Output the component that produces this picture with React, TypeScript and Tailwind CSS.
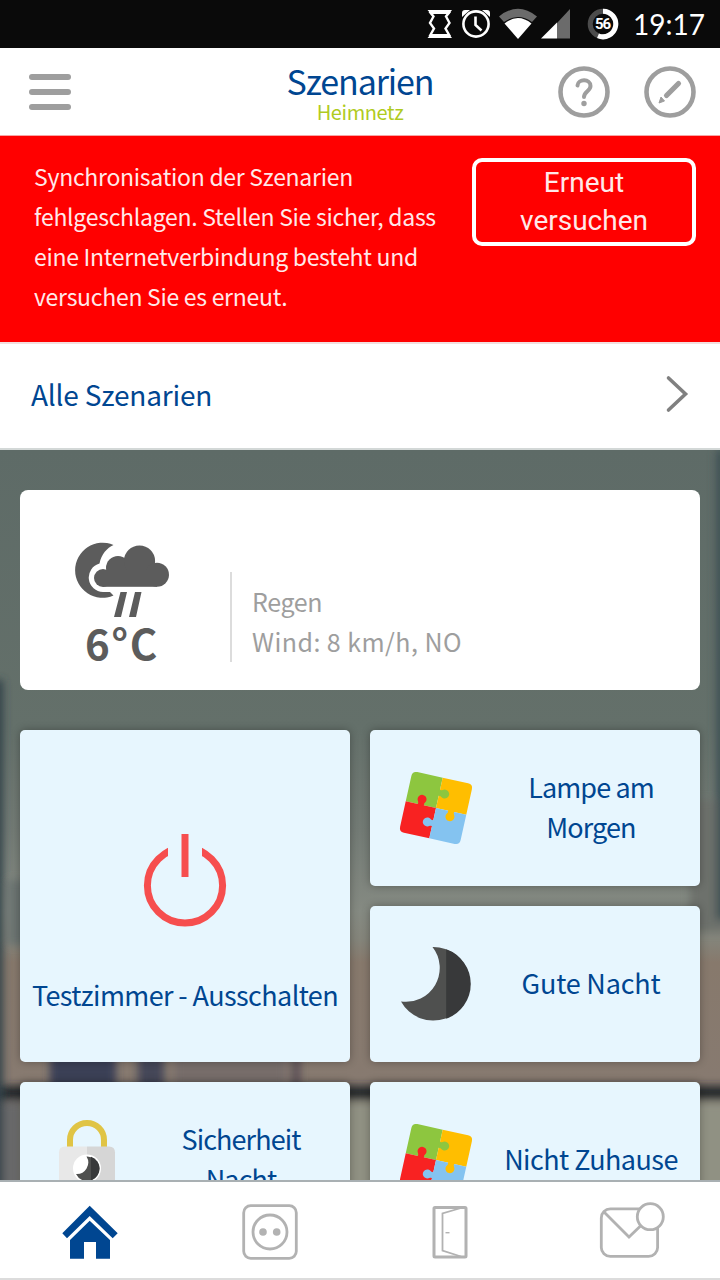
import React from 'react';
import clsx from 'clsx';

const FONT = "font-['Noto_Sans_CJK_SC','Noto_Sans',sans-serif]";

function StatusBar() {
  return (
    <div className="h-12 bg-[#0a0a0a] flex items-center justify-end pr-[15px] text-white">
      <svg className="mr-2" width="26" height="32" viewBox="0 0 26 32" fill="none" stroke="white">
        <path d="M.5 2H25L22 6H4ZM4 26H22L25 30H.5Z" fill="white" stroke="none" />
        <path d="M2.500 3.500L6.500 8.500L3 15L7 20.500L2.500 28.500M23 3.500L19 8.500L22.500 15L18.500 20.500L23 28.500" strokeWidth="2.400" />
      </svg>
      <svg className="mr-2" width="30" height="32" viewBox="0 0 30 32" fill="none" stroke="white">
        <circle cx="15" cy="16" r="12.600" strokeWidth="2.600" />
        <path d="M1 9V5Q1 2 4 2H9ZM29 9V5Q29 2 26 2H21Z" fill="white" stroke="none" />
        <path d="M14.500 8.500V17l6 5.500" strokeWidth="2.600" />
      </svg>
      <svg className="mr-1" width="38" height="32" viewBox="0 0 38 32">
        <path d="M0 8.500Q19-7 38 8.500L33 14Q19 4 5 14Z" fill="#6b6b6b" />
        <path d="M5.500 15.500Q19 4.500 32.500 15.500L19 31Z" fill="white" />
      </svg>
      <svg className="mr-[17px]" width="29" height="32" viewBox="0 0 29 32">
        <path d="M16 15L29 1V30.500H16Z" fill="#6b6b6b" />
        <path d="M0 30.500L16 14.500V30.500Z" fill="white" />
      </svg>
      <div className="relative mr-[14px] w-8 h-8 flex items-center justify-center">
        <svg className="absolute inset-0" width="32" height="32" viewBox="0 0 32 32" fill="none" strokeWidth="5">
          <circle cx="16" cy="16" r="12.800" stroke="#4c4c4c" />
          <path d="M16 3.200A12.800 12.800 0 1 1 11 27.800" stroke="white" />
        </svg>
        <span className="relative font-[Roboto,sans-serif] text-[15px] leading-none font-bold tracking-[-1px] pr-px">56</span>
      </div>
      <span className="font-['Lato',sans-serif] text-[28px] leading-none w-[72px] whitespace-nowrap">19:17</span>
    </div>
  );
}

function Header() {
  return (
    <header className="h-[88px] bg-white border-b border-[#f7a5a5] grid grid-cols-[1fr_auto_1fr] items-center">
      <div className="pl-[29px] flex flex-col gap-[9px]">
        <span className="w-[42px] h-1.5 rounded-full bg-[#9e9e9e]" />
        <span className="w-[42px] h-1.5 rounded-full bg-[#9e9e9e]" />
        <span className="w-[42px] h-1.5 rounded-full bg-[#9e9e9e]" />
      </div>
      <div className="text-center pt-0.5">
        <h1 className="text-[34px] leading-[38px] tracking-[-1.1px] text-[#004691]">Szenarien</h1>
        <p className="text-[20px] leading-6 tracking-[-0.4px] text-[#b0cb1f]">Heimnetz</p>
      </div>
      <div className="flex justify-end gap-[34px] pr-6">
        <svg width="52" height="52" viewBox="0 0 52 52" fill="none" stroke="#9e9e9e">
          <circle cx="26" cy="26" r="23.500" strokeWidth="4.600" />
          <path d="M19.500 19.500C20 12.500 32.500 12.500 32.500 20C32.500 25 26 25.500 26 31" strokeWidth="4" strokeLinecap="round" />
          <circle cx="26" cy="37.500" r="2.700" fill="#9e9e9e" stroke="none" />
        </svg>
        <svg width="52" height="52" viewBox="0 0 52 52" fill="none" stroke="#9e9e9e">
          <circle cx="26" cy="26" r="23.500" strokeWidth="4.600" />
          <path d="M22.500 29.500L34.500 17.500" strokeWidth="5.200" strokeLinecap="round" />
          <path d="M17 31L20.500 35L15 37Z" fill="#9e9e9e" strokeWidth="1" strokeLinejoin="round" />
        </svg>
      </div>
    </header>
  );
}

function SyncError() {
  return (
    <section className="h-[206px] bg-[#ff0000] flex items-start justify-between pl-[34px] pr-6 pt-[22px]">
      <p className="-mt-0.5 text-[23px] leading-10 tracking-[-0.28px] text-[#ffe9e9] whitespace-nowrap">
        Synchronisation der Szenarien<br />
        fehlgeschlagen. Stellen Sie sicher, dass<br />
        eine Internetverbindung besteht und<br />
        versuchen Sie es erneut.
      </p>
      <button className="w-[224px] h-[88px] border-4 border-white rounded-[10px] font-[Roboto,sans-serif] text-[28px] leading-[38px] text-[#ffe9e9]">
        Erneut<br />versuchen
      </button>
    </section>
  );
}

// blurred book shelf behind the tiles
function Backdrop() {
  return (
    <svg className="absolute inset-0" width="720" height="732" viewBox="0 0 720 732" preserveAspectRatio="none">
      <defs>
        <linearGradient id="wall" x1="0" y1="0" x2="0" y2="1">
          <stop offset="0" stopColor="#5e6b67" />
          <stop offset="0.38" stopColor="#64706a" />
          <stop offset="0.52" stopColor="#737b75" />
          <stop offset="0.63" stopColor="#858a82" />
          <stop offset="0.67" stopColor="#84847a" />
          <stop offset="0.7" stopColor="#87796c" />
          <stop offset="0.86" stopColor="#877a70" />
        </linearGradient>
        <filter id="soft" x="-5%" y="-5%" width="110%" height="110%">
          <feGaussianBlur stdDeviation="4" />
        </filter>
      </defs>
      <rect width="720" height="732" fill="url(#wall)" />
      <g filter="url(#soft)">
        <rect x="8" y="430" width="40" height="65" fill="#6b7371" />
        <rect x="50" y="604" width="66" height="32" fill="#3b4157" />
        <rect x="138" y="604" width="26" height="32" fill="#444659" />
        <rect x="174" y="604" width="112" height="32" fill="#776d6b" />
        <rect x="292" y="604" width="8" height="32" fill="#574c55" />
        <rect x="690" y="350" width="40" height="132" fill="#6d716c" />
        <rect x="-10" y="652" width="740" height="90" fill="#909183" />
        <rect x="-10" y="652" width="32" height="90" fill="#69696a" />
        <rect x="-10" y="636" width="740" height="14" fill="#242729" />
        <rect x="-10" y="230" width="13" height="510" fill="#30434a" />
        <rect x="716" y="0" width="14" height="470" fill="#3f5155" />
      </g>
    </svg>
  );
}

function Weather() {
  return (
    <div className="h-[200px] rounded-lg bg-white flex">
      <div className="w-[204px] pt-[51px] flex flex-col items-center text-[#5c5c5c]">
        <svg width="96" height="78" viewBox="74 541 96 78" fill="#5c5c5c">
          <path d="M113.500 545A27.500 27.500 0 1 0 113.500 595.500L110 592H103A14.500 14.500 0 0 1 99.500 563.500C101.500 554 107 548 113.500 545Z" />
          <circle cx="103" cy="578" r="9" />
          <circle cx="118" cy="568" r="12" />
          <circle cx="139.500" cy="561" r="15.600" />
          <circle cx="157" cy="574.800" r="12" />
          <rect x="103" y="570" width="54" height="16.800" />
          <path d="M120.500 592H127L121 617H114ZM135 592H141.500L136 617H129Z" />
        </svg>
        <span className="-mt-0.5 text-[42px] leading-[50px] font-bold tracking-[1.5px]">6°C</span>
      </div>
      <div className="mt-[82px] ml-[6px] h-[90px] w-0.5 bg-[#dcdcdc]" />
      <p className="mt-[91px] ml-5 text-[25px] leading-10 text-[#9e9e9e] whitespace-nowrap">
        <span className="tracking-[-0.4px]">Regen</span><br />
        <span className="tracking-[0.45px]">Wind: 8 km/h, NO</span>
      </p>
    </div>
  );
}

function PowerIcon() {
  return (
    <svg width="84" height="96" viewBox="0 0 84 96" fill="none" stroke="#f64e4e" strokeWidth="7">
      <circle cx="42" cy="51.500" r="37.600" />
      <rect x="25" y="5" width="34" height="25" fill="#e7f6fe" stroke="none" />
      <path d="M42 0V43" />
    </svg>
  );
}

function PuzzleIcon() {
  return (
    <svg width="76" height="76" viewBox="-38 -38 76 76">
      <g transform="rotate(12.5)">
        <path d="M0-31H-26Q-31-31-31-26V0H0Z" fill="#8dc63f" />
        <path d="M0-31H26Q31-31 31-26V0H0Z" fill="#ffbe00" />
        <path d="M0 31H-26Q-31 31-31 26V0H0Z" fill="#f82222" />
        <path d="M0 31H26Q31 31 31 26V0H0Z" fill="#84c3f0" />
        <path d="M-1-18.500H4V-12.500H-1Z" fill="#8dc63f" />
        <circle cx="5.500" cy="-15.500" r="4.500" fill="#8dc63f" />
        <path d="M12.500-1H18.500V4H12.500Z" fill="#ffbe00" />
        <circle cx="15.500" cy="5.500" r="4.500" fill="#ffbe00" />
        <path d="M-4 12.500H1V18.500H-4Z" fill="#84c3f0" />
        <circle cx="-5.500" cy="15.500" r="4.500" fill="#84c3f0" />
        <path d="M-18.500-4H-12.500V1H-18.500Z" fill="#f82222" />
        <circle cx="-15.500" cy="-5.500" r="4.500" fill="#f82222" />
      </g>
    </svg>
  );
}

function MoonIcon() {
  return (
    <svg width="76" height="76" viewBox="-36 -38 76 76">
      <path d="M-1.500-37A36.800 36.800 0 1 1-33 17.500A33.900 33.900 0 0 0-1.500-37Z" fill="#4f504f" />
      <path d="M12.200-34.700A36.800 36.800 0 0 1 12.200 34.700Z" fill="#38393a" />
    </svg>
  );
}

function LockIcon() {
  return (
    <svg width="60" height="84" viewBox="-2 -1 60 84">
      <path d="M12 30V21a17 17 0 0 1 34 0V30" fill="none" stroke="#e0c445" strokeWidth="6" />
      <path d="M7 27.500H29V82H7Q1 82 1 76V33.500Q1 27.500 7 27.500Z" fill="#e8e8e8" />
      <path d="M29 27.500H51Q57 27.500 57 33.500V76Q57 82 51 82H29Z" fill="#d6d6d6" />
      <circle cx="29" cy="49.500" r="14" fill="white" />
      <path d="M28.500 37.500A12.300 12.300 0 1 1 18 55A11.500 11.500 0 0 0 28.500 37.500Z" fill="#4f504f" />
      <path d="M33 37.800A12.300 12.300 0 0 1 33 61.200Z" fill="#38393a" />
    </svg>
  );
}

const TILE = 'rounded-[5px] bg-[#e7f6fe] text-[#004691] text-[27px] leading-10 shadow-[0_0_8px_rgba(0,0,0,0.3)]';

type TileProps = {
  icon: React.ReactNode;
  lines: string[];
  tracking?: string;
};

function Tile({ icon, lines, tracking = 'tracking-[-0.55px]' }: TileProps) {
  return (
    <div className={clsx(TILE, tracking, 'h-[156px] flex items-center')}>
      <div className="w-[132px] flex justify-center">{icon}</div>
      <div className="w-[178px] -mt-0.5 text-center whitespace-nowrap">
        {lines.map((line) => (
          <div key={line}>{line}</div>
        ))}
      </div>
    </div>
  );
}

function BottomNav() {
  return (
    <nav className="h-[98px] bg-white border-b-2 border-[#dcdcdc] pt-1 grid grid-cols-4 items-center justify-items-center shrink-0">
      <svg width="72" height="60" viewBox="0 0 72 60" fill="#004691">
        <path d="M35.700 3.700L63.700 31.300L58.700 36.300L35.700 14L13 36.300L8.300 31.300Z" />
        <path d="M35.700 18.700L56 38V56.700H42V40H30V56.700H16V38Z" />
      </svg>
      <svg width="72" height="60" viewBox="0 0 72 60" fill="none" stroke="#b2b2b2" strokeWidth="2.800">
        <rect x="9.700" y="3.700" width="52.600" height="52.600" rx="7" />
        <circle cx="36" cy="30" r="17" />
        <circle cx="29" cy="30" r="3.800" fill="#b2b2b2" stroke="none" />
        <circle cx="42.700" cy="30" r="3.800" fill="#b2b2b2" stroke="none" />
      </svg>
      <svg width="72" height="60" viewBox="0 0 72 60" fill="none" stroke="#b2b2b2">
        <rect x="20" y="5.500" width="32" height="49.500" rx="1" strokeWidth="3" />
        <path d="M47 6L28.500 11.500V48.500L47 54.500" strokeWidth="1.800" />
        <path d="M31.500 30.700H35.500" strokeWidth="1.400" />
      </svg>
      <svg width="72" height="60" viewBox="0 0 72 60" fill="none" stroke="#b2b2b2" strokeWidth="2.800">
        <rect x="7.300" y="6.900" width="56.300" height="47.500" rx="9" />
        <path d="M10 10L35 35L48 22.500" />
        <circle cx="56.300" cy="14.700" r="13" fill="white" />
      </svg>
    </nav>
  );
}

function App() {
  return (
    <div className={clsx(FONT, 'w-[720px] h-[1280px] overflow-hidden flex flex-col bg-white')}>
      <StatusBar />
      <Header />
      <SyncError />
      <div className="h-[108px] bg-white border-y-2 border-t-[#f3dede] border-b-[#d3d8d7] flex items-center justify-between pl-[31px] pr-[31px] pb-1">
        <span className="-mt-px text-[28px] leading-10 tracking-[-0.2px] text-[#004691]">Alle Szenarien</span>
        <svg width="24" height="38" viewBox="0 0 24 38" fill="none" stroke="#808080" strokeWidth="3.600" strokeLinecap="round">
          <path d="M3.500 3L20.500 19L3.500 35" />
        </svg>
      </div>
      <main className="relative flex-1 min-h-0 overflow-hidden border-b-2 border-[#a9b0b3]">
        <Backdrop />
        <div className="relative p-5 pt-10">
          <Weather />
          <div className="mt-10 grid grid-cols-2 gap-5">
            <div className={clsx(TILE, 'row-span-2 h-[332px] flex flex-col items-center pt-[104px]')}>
              <PowerIcon />
              <span className="mt-[45px] whitespace-nowrap tracking-[-0.6px]">Testzimmer - Ausschalten</span>
            </div>
            <Tile icon={<PuzzleIcon />} lines={['Lampe am', 'Morgen']} tracking="tracking-[-0.9px]" />
            <Tile icon={<MoonIcon />} lines={['Gute Nacht']} tracking="tracking-[-0.2px]" />
            <Tile icon={<LockIcon />} lines={['Sicherheit', 'Nacht']} tracking="tracking-[-0.9px]" />
            <Tile icon={<PuzzleIcon />} lines={['Nicht Zuhause']} />
          </div>
        </div>
      </main>
      <BottomNav />
    </div>
  );
}

export default App;
